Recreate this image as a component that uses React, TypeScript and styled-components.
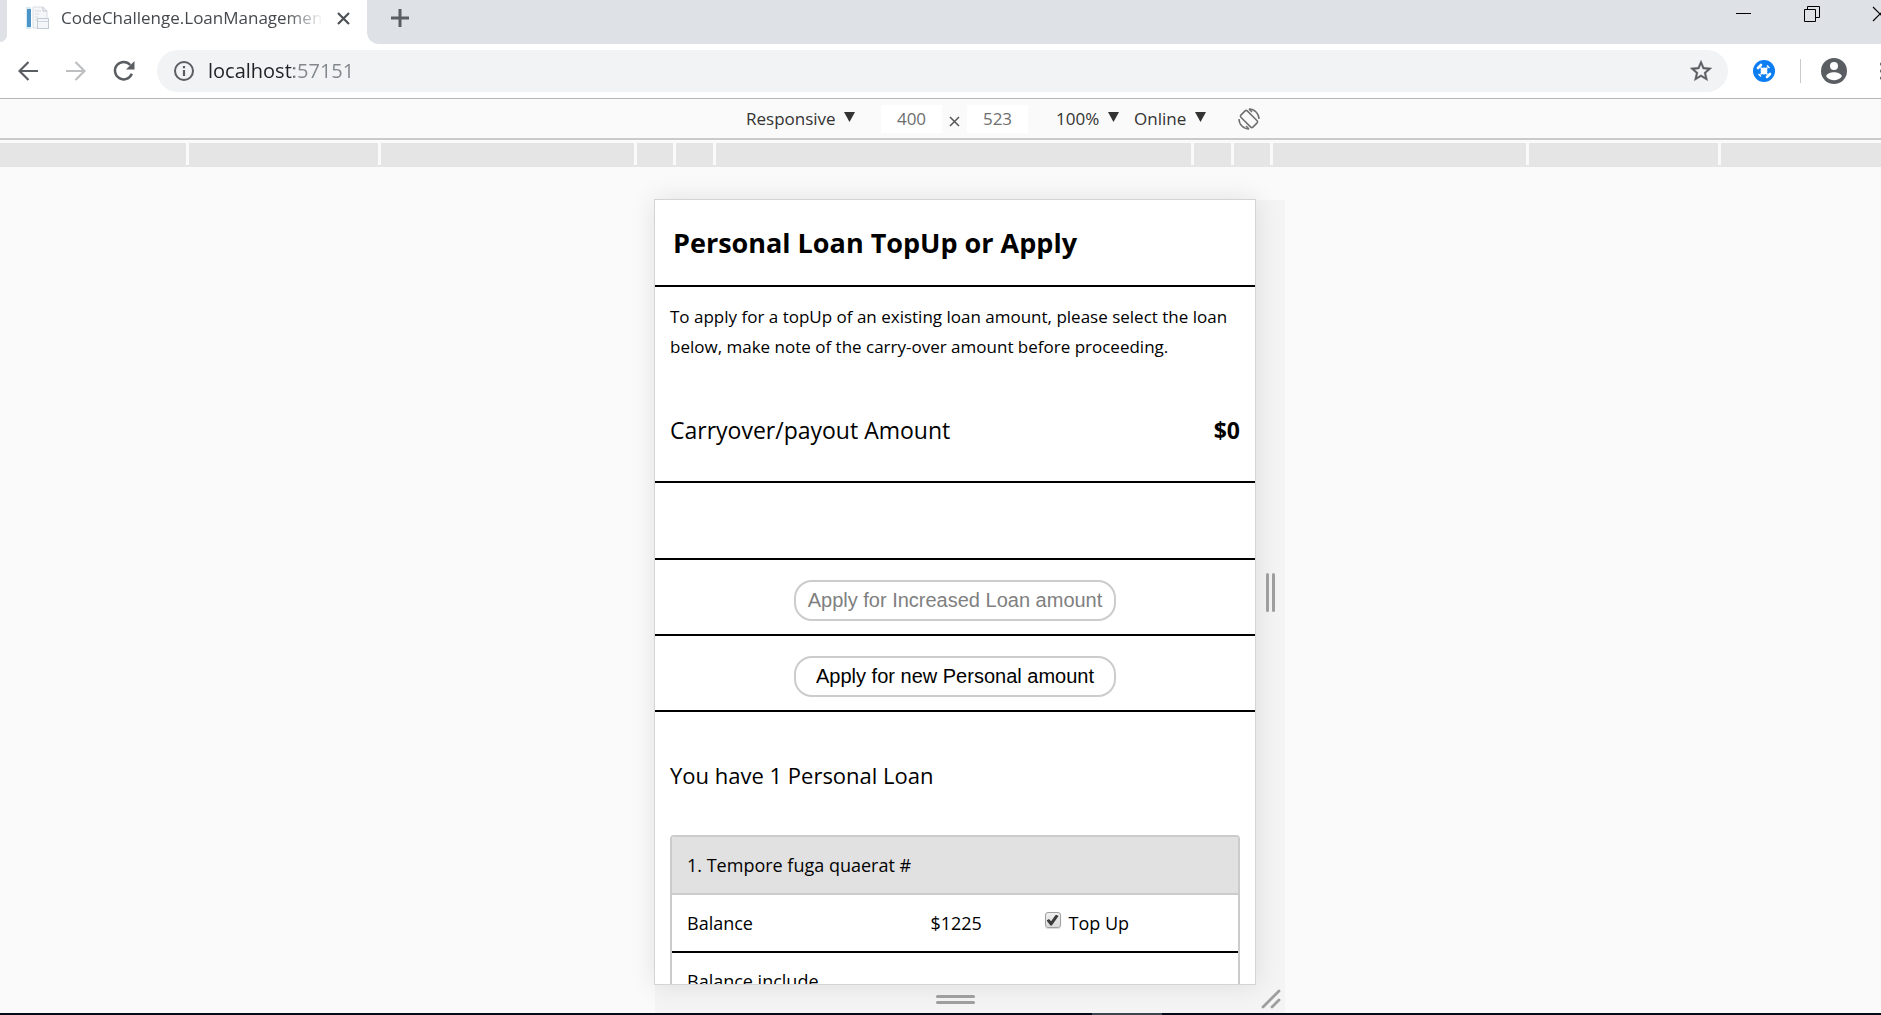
import React from "react";
import styled, { createGlobalStyle } from "styled-components";

const GlobalStyle = createGlobalStyle`
  * { box-sizing: border-box; }
  body {
    margin: 0;
    background: #fafafa;
    color: #000;
    font-family: "Open Sans", "Noto Sans", sans-serif;
  }
  button, input, select { font: inherit; }
`;

const Viewport = styled.div`
  height: 100vh;
  overflow: hidden;
`;

/* The browser window runs a little past the right edge of the screen. */
const BrowserWindow = styled.div`
  width: calc(100% + 29px);
  height: 100%;
  display: flex;
  flex-direction: column;
`;

const TabStrip = styled.header`
  flex: none;
  height: 44px;
  display: flex;
  background: #fff;
`;

const StripEdge = styled.div`
  width: 7px;
  height: 42px;
  background: #dee1e6;
  border-bottom-right-radius: 8px;
`;

const Tab = styled.div`
  width: 360px;
  height: 36px;
  padding: 0 16px 0 19px;
  display: flex;
  align-items: center;
`;

const TabTitle = styled.span`
  flex: 1;
  margin: 0 12px;
  overflow: hidden;
  white-space: nowrap;
  font-size: 17px;
  line-height: 24px;
  color: #45494d;
  mask-image: linear-gradient(to right, #000 calc(100% - 36px), transparent);
`;

const StripRest = styled.div`
  flex: 1;
  padding: 0 18px 0 24px;
  display: flex;
  align-items: flex-start;
  background: #dee1e6;
  border-bottom-left-radius: 12px;
`;

const IconButton = styled.button<{ $w?: number; $h?: number }>`
  flex: none;
  width: ${(p) => p.$w ?? 24}px;
  height: ${(p) => p.$h ?? 36}px;
  padding: 0;
  border: 0;
  background: none;
  color: #5f6368;
  display: flex;
  align-items: center;
  justify-content: center;
  svg { flex: none; display: block; }
`;

const MenuButton = styled(IconButton)`
  margin-left: 23px;
`;

const RotateButton = styled(IconButton)`
  margin-left: 16px;
`;

const WindowControls = styled.div`
  margin-left: auto;
  display: flex;
  gap: 44px;
`;

const Toolbar = styled.nav`
  flex: none;
  height: 55px;
  padding: 0 16px;
  display: flex;
  align-items: center;
  border-bottom: 1px solid #b4b5b7;
  background: #fff;
`;

const NavGroup = styled.div`
  display: flex;
  gap: 24px;
  margin-right: 21px;
`;

const AddressBar = styled.div`
  flex: 1;
  height: 42px;
  padding: 0 15px;
  display: flex;
  align-items: center;
  border-radius: 21px;
  background: #f1f3f4;
`;

/* The host part is dark and the port part grey. */
const AddressInput = styled.input`
  flex: 1;
  min-width: 0;
  margin-left: 12px;
  padding: 0;
  border: 0;
  outline: 0;
  font-size: 20px;
  line-height: 28px;
  color: #202124;
  -webkit-text-fill-color: transparent;
  background: linear-gradient(to right, #202124 86px, #80868b 86px);
  background-clip: text;
`;

const ToolbarEnd = styled.div`
  margin-left: 24px;
  display: flex;
  align-items: center;
`;

const Divider = styled.span`
  width: 1px;
  height: 24px;
  margin: 0 20px 0 24px;
  background: #c8cacc;
`;

const DeviceBar = styled.div`
  flex: none;
  height: 41px;
  padding-left: 97px;
  display: flex;
  align-items: center;
  justify-content: center;
  border-bottom: 2px solid #cacaca;
  background: #fafafa;
  font-size: 17px;
`;

const Picker = styled.label`
  display: flex;
  align-items: center;
  gap: 8px;
  margin-right: 15px;
`;

const PickerSelect = styled.select`
  appearance: none;
  padding: 0;
  border: 0;
  background: none;
  line-height: 24px;
  color: #333;
`;

const SizeInput = styled.input`
  width: 61px;
  height: 28px;
  padding: 0;
  border: 0;
  text-align: center;
  background: #fff;
  color: #6e6e6e;
`;

const SizeGroup = styled.div`
  display: flex;
  align-items: center;
  gap: 7px;
  margin: 0 28px 0 11px;
`;

const Ruler = styled.div`
  flex: none;
  height: 24px;
  margin-top: 3px;
  padding-bottom: 2px;
  display: flex;
  background: #e5e5e5;
`;

const RulerPart = styled.span<{ $w?: number; $last?: boolean }>`
  flex: ${(p) => (p.$w ? `0 0 ${p.$w}px` : "1 1 0")};
  border-right: 3px solid ${(p) => (p.$last ? "#e5e5e5" : "#fafafa")};
`;

const Stage = styled.main`
  flex: 1;
  min-height: 0;
  padding-top: 32px;
  display: grid;
  grid-template-columns: 1fr 602px 1fr;
  grid-template-rows: minmax(0, 1fr) 28px;
  background: #fafafa;
`;

const Device = styled.section`
  grid-column: 2;
  min-height: 0;
  overflow: hidden;
  border: 1px solid #d4d4d4;
  background: #fff;
  box-shadow: 0 0 24px rgba(0, 0, 0, 0.1);
`;

const Handle = styled.div<{ $side?: boolean }>`
  grid-column: ${(p) => (p.$side ? 3 : 2)};
  width: ${(p) => (p.$side ? "29px" : "auto")};
  margin: ${(p) => (p.$side ? "1px 0 0" : "0 0 0 1px")};
  display: flex;
  flex-direction: ${(p) => (p.$side ? "row" : "column")};
  align-items: center;
  justify-content: center;
  gap: 3px;
  background: rgba(0, 0, 0, 0.025);
`;

const Grip = styled.span<{ $side?: boolean }>`
  width: ${(p) => (p.$side ? 3 : 39)}px;
  height: ${(p) => (p.$side ? 39 : 3)}px;
  border-radius: 2px;
  background: #9e9e9e;
`;

const Corner = styled.div`
  width: 29px;
  display: flex;
  align-items: center;
  justify-content: center;
  background: rgba(0, 0, 0, 0.025);
`;

const Taskbar = styled.footer`
  flex: none;
  height: 2px;
  padding-left: 1092px;
  background: #020a18;
`;

const TaskbarItem = styled.div`
  width: 70px;
  height: 2px;
  background: #3c444e;
`;

const Title = styled.h1`
  margin: 0;
  padding: 0 18px;
  border-bottom: 2px solid #000;
  font-size: 27px;
  line-height: 85px;
  font-weight: 700;
`;

const Intro = styled.p`
  margin: 0;
  padding: 15px 15px 0;
  font-size: 17px;
  line-height: 30px;
`;

const Carryover = styled.div`
  padding: 53px 15px 36px;
  display: flex;
  justify-content: space-between;
  border-bottom: 2px solid #000;
  font-size: 23px;
  line-height: 30px;
`;

const ActionRow = styled.div<{ $empty?: boolean }>`
  height: ${(p) => (p.$empty ? 77 : 76)}px;
  padding-top: 20px;
  display: flex;
  align-items: flex-start;
  justify-content: center;
  border-bottom: 2px solid #000;
`;

const ActionButton = styled.button`
  width: 322px;
  height: 41px;
  padding: 0;
  border: 2px solid #ccc;
  border-radius: 18px;
  background: #fff;
  font-family: "Liberation Sans", Arial, sans-serif;
  font-size: 20px;
  color: #000;
  &:disabled { color: #808080; }
`;

const LoanHeading = styled.h2`
  margin: 0;
  padding: 48px 15px 45px;
  font-size: 22px;
  line-height: 30px;
  font-weight: 400;
`;

const LoanTable = styled.table`
  width: calc(100% - 30px);
  margin: 0 15px;
  table-layout: fixed;
  border: 2px solid #ccc;
  border-radius: 4px;
  border-spacing: 0;
  font-size: 18px;
  text-align: left;
  th, td {
    height: 58px;
    padding: 0 15px;
    font-weight: 400;
    white-space: nowrap;
    border-bottom: 2px solid #000;
  }
  thead th {
    background: #e1e1e1;
    border-bottom-color: #ccc;
  }
`;

const Column = styled.col<{ $w: string }>`
  width: ${(p) => p.$w};
`;

const TopUpLabel = styled.label`
  display: flex;
  align-items: center;
  gap: 8px;
`;

const TopUpBox = styled.input`
  appearance: none;
  width: 16px;
  height: 16px;
  margin: 0 0 6px 1px;
  border: 1px solid #a0a0a0;
  border-radius: 3px;
  background: linear-gradient(#eee, #dcdcdc);
  box-shadow: 0 1px 1px rgba(0, 0, 0, 0.15);
  display: grid;
  place-items: center;
  &:checked::before {
    content: "";
    width: 12px;
    height: 11px;
    background: #3c3c3c;
    clip-path: polygon(0 55%, 20% 40%, 38% 62%, 78% 0, 100% 14%, 44% 100%, 32% 100%);
  }
`;

const DownArrow = () => (
  <svg width="11" height="13" viewBox="0 0 11 13" aria-hidden="true">
    <path d="M0 0h11L5.500 10z" fill="#333" />
  </svg>
);

function PickerField({ name, value }: { name: string; value: string }) {
  return (
    <Picker>
      <PickerSelect aria-label={name} defaultValue={value}>
        <option>{value}</option>
      </PickerSelect>
      <DownArrow />
    </Picker>
  );
}

const Favicon = () => (
  <svg width="23" height="24" viewBox="0 0 23 24" aria-hidden="true">
    <rect x="0" y="1" width="5" height="22" fill="#d7e9f3" />
    <rect x="1" y="3" width="4" height="18" fill="#4a94c8" />
    <path d="M7 1h10l4 4v17H7z" fill="#f4f6f8" stroke="#d8dde2" />
    <path d="M9 5h6M9 8h4M9 11h3M9 14h2" stroke="#d3dae1" />
    <path d="M17 1v4h4" fill="none" stroke="#b8c2cc" />
    <rect x="11.500" y="12.500" width="11" height="10" fill="#f4f6f9" stroke="#c1cad3" />
    <path d="M12 15.500h10" stroke="#ced6dd" />
  </svg>
);

const App = () => (
  <>
    <GlobalStyle />
    <Viewport>
      <BrowserWindow>
        <TabStrip>
          <StripEdge />
          <Tab>
            <Favicon />
            <TabTitle>CodeChallenge.LoanManagement</TabTitle>
            <IconButton $w={16} aria-label="Close tab">
              <svg width="13" height="13" viewBox="0 0 13 13">
                <path d="M1 1l11 11M12 1L1 12" stroke="#4d5156" strokeWidth="2.200" />
              </svg>
            </IconButton>
          </Tab>
          <StripRest>
            <IconButton $w={18} aria-label="New tab">
              <svg width="18" height="18" viewBox="0 0 18 18">
                <path d="M9 0v18M0 9h18" stroke="#5a5e63" strokeWidth="3" />
              </svg>
            </IconButton>
            <WindowControls>
              <IconButton $h={28} aria-label="Minimize">
                <svg width="16" height="16" viewBox="0 0 16 16">
                  <path d="M0 7.500h15" stroke="#000" />
                </svg>
              </IconButton>
              <IconButton $h={28} aria-label="Restore">
                <svg width="16" height="16" viewBox="0 0 16 16" fill="none" stroke="#000">
                  <path d="M.5 3.500h11v12H.5zM3.500 3.500v-3h12v11h-4" />
                </svg>
              </IconButton>
              <IconButton $h={28} aria-label="Close">
                <svg width="16" height="16" viewBox="0 0 16 16">
                  <path d="M1 1l14 14M15 1L1 15" stroke="#000" strokeWidth="1.200" />
                </svg>
              </IconButton>
            </WindowControls>
          </StripRest>
        </TabStrip>

        <Toolbar>
          <NavGroup>
            <IconButton aria-label="Back">
              <svg width="20" height="20" viewBox="0 0 20 20" fill="none" stroke="#5a5e63" strokeWidth="2.200">
                <path d="M20 10H2M10.500 1L1.500 10l9 9" />
              </svg>
            </IconButton>
            <IconButton aria-label="Forward">
              <svg width="20" height="20" viewBox="0 0 20 20" fill="none" stroke="#bdbfc1" strokeWidth="2.200">
                <path d="M0 10h18M9.500 1l9 9-9 9" />
              </svg>
            </IconButton>
            <IconButton aria-label="Reload">
              <svg width="22" height="22" viewBox="0 0 22 22">
                <path d="M18.800 13.800A8.700 8.700 0 1 1 17.300 5" fill="none" stroke="#5a5e63" strokeWidth="2.500" />
                <path d="M21.500 1v8.500H13z" fill="#5a5e63" />
              </svg>
            </IconButton>
          </NavGroup>
          <AddressBar>
            <IconButton aria-label="Site information">
              <svg width="22" height="22" viewBox="0 0 22 22">
                <circle cx="11" cy="11" r="9" fill="none" stroke="#5a5e63" strokeWidth="2" />
                <path d="M11 10v6M11 6v2.200" stroke="#5a5e63" strokeWidth="2.200" />
              </svg>
            </IconButton>
            <AddressInput aria-label="Address" defaultValue="localhost:57151" />
            <IconButton aria-label="Bookmark">
              <svg width="26" height="26" viewBox="0 0 24 24">
                <path
                  d="M22 9.240l-7.190-.62L12 2 9.190 8.630 2 9.240l5.460 4.730L5.820 21 12 17.270 18.180 21l-1.630-7.030L22 9.240zM12 15.400l-3.760 2.270 1-4.280-3.320-2.880 4.380-.38L12 6.100l1.710 4.040 4.380.38-3.320 2.880 1 4.280L12 15.400z"
                  fill="#5a5e63"
                  stroke="#5a5e63"
                  strokeWidth=".3"
                />
              </svg>
            </IconButton>
          </AddressBar>
          <ToolbarEnd>
            <IconButton aria-label="Extension">
              <svg width="22" height="22" viewBox="0 0 22 22">
                <circle cx="11" cy="11" r="11" fill="#0d7df2" />
                <circle cx="11" cy="11" r="3.400" fill="#fff" />
                <path d="M7.500 7.500l7 7M14.500 7.500l-7 7" stroke="#fff" strokeWidth="1.500" />
                <path d="M5 8l3-3M14 17l3-3" stroke="#fff" strokeWidth="2.600" strokeLinecap="round" />
                <path d="M14 5.500l2.500 2.500M5.500 14l2.500 2.500" stroke="#fff" strokeWidth="1.400" />
              </svg>
            </IconButton>
            <Divider />
            <IconButton $w={26} aria-label="Profile">
              <svg width="26" height="26" viewBox="0 0 26 26">
                <circle cx="13" cy="13" r="13" fill="#5a5e63" />
                <circle cx="13" cy="8" r="4" fill="#fff" />
                <path d="M5.200 18.500c0-2.800 5-4.200 7.800-4.200s7.800 1.400 7.800 4.200c-2 2.600-5 3.700-7.800 3.700s-5.800-1.100-7.800-3.700z" fill="#fff" />
              </svg>
            </IconButton>
            <MenuButton aria-label="Menu">
              <svg width="4" height="18" viewBox="0 0 4 18" fill="#5a5e63">
                <circle cx="2" cy="2" r="2" />
                <circle cx="2" cy="9" r="2" />
                <circle cx="2" cy="16" r="2" />
              </svg>
            </MenuButton>
          </ToolbarEnd>
        </Toolbar>

        <DeviceBar>
          <PickerField name="Device" value="Responsive" />
          <SizeGroup>
            <SizeInput aria-label="Width" defaultValue="400" />
            <svg width="11" height="16" viewBox="0 0 11 16" aria-hidden="true">
              <path d="M1 6l9 9M10 6l-9 9" stroke="#555" strokeWidth="1.500" />
            </svg>
            <SizeInput aria-label="Height" defaultValue="523" />
          </SizeGroup>
          <PickerField name="Zoom" value="100%" />
          <PickerField name="Throttling" value="Online" />
          <RotateButton aria-label="Rotate">
            <svg width="22" height="22" viewBox="0 0 22 22" fill="none" stroke="#6e6e6e" strokeWidth="1.500">
              <rect x="6.500" y="2.500" width="9" height="17" rx="1.500" transform="rotate(-45 11 11)" />
              <path d="M11 1a10 10 0 0 1 10 10M11 21A10 10 0 0 1 1 11" />
              <path d="M11 1l3 3M11 21l-3-3" />
            </svg>
          </RotateButton>
        </DeviceBar>

        <Ruler>
          <RulerPart />
          <RulerPart $w={192} />
          <RulerPart $w={256} />
          <RulerPart $w={39} />
          <RulerPart $w={40} />
          <RulerPart $w={478} />
          <RulerPart $w={40} />
          <RulerPart $w={39} />
          <RulerPart $w={256} />
          <RulerPart $w={192} />
          <RulerPart $last />
        </Ruler>

        <Stage>
          <Device>
            <Title>Personal Loan TopUp or Apply</Title>
            <Intro>
              To apply for a topUp of an existing loan amount, please select the loan below, make note
              of the carry-over amount before proceeding.
            </Intro>
            <Carryover>
              <span>Carryover/payout Amount</span>
              <strong>$0</strong>
            </Carryover>
            <ActionRow $empty />
            <ActionRow>
              <ActionButton disabled>Apply for Increased Loan amount</ActionButton>
            </ActionRow>
            <ActionRow>
              <ActionButton>Apply for new Personal amount</ActionButton>
            </ActionRow>
            <LoanHeading>You have 1 Personal Loan</LoanHeading>
            <LoanTable>
              <colgroup>
                <Column $w="43%" />
                <Column $w="20%" />
                <Column $w="37%" />
              </colgroup>
              <thead>
                <tr>
                  <th colSpan={3}>1. Tempore fuga quaerat #</th>
                </tr>
              </thead>
              <tbody>
                <tr>
                  <td>Balance</td>
                  <td>$1225</td>
                  <td>
                    <TopUpLabel>
                      <TopUpBox type="checkbox" defaultChecked />
                      Top Up
                    </TopUpLabel>
                  </td>
                </tr>
                <tr>
                  <td colSpan={3}>Balance include</td>
                </tr>
              </tbody>
            </LoanTable>
          </Device>
          <Handle $side>
            <Grip $side />
            <Grip $side />
          </Handle>
          <Handle>
            <Grip />
            <Grip />
          </Handle>
          <Corner>
            <svg width="20" height="20" viewBox="0 0 20 20" stroke="#9e9e9e" strokeWidth="2.800" strokeLinecap="round" aria-hidden="true">
              <path d="M2 18L18 2M11 18l7-7" />
            </svg>
          </Corner>
        </Stage>

        <Taskbar>
          <TaskbarItem />
        </Taskbar>
      </BrowserWindow>
    </Viewport>
  </>
);

export default App;
